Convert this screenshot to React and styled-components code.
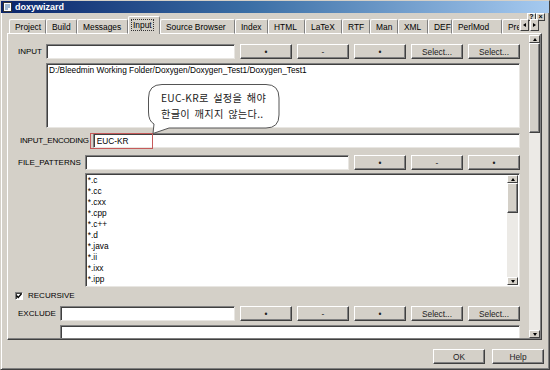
import React from 'react'
import styled, { createGlobalStyle } from 'styled-components'

const GlobalStyle = createGlobalStyle`
  html, body {
    margin: 0;
    padding: 0;
    background: #d4d0c8;
  }
  body {
    font-family: "Liberation Sans", Arial, sans-serif;
  }
`

const tabs = [
  { name: 'Project', w: 37 },
  { name: 'Build', w: 31 },
  { name: 'Messages', w: 51 },
  { name: 'Input', w: 32, active: true },
  { name: 'Source Browser', w: 75 },
  { name: 'Index', w: 33 },
  { name: 'HTML', w: 37 },
  { name: 'LaTeX', w: 37 },
  { name: 'RTF', w: 28 },
  { name: 'Man', w: 28 },
  { name: 'XML', w: 30 },
  { name: 'DEF', w: 24 },
  { name: 'PerlMod', w: 50 },
  { name: 'Preprocessor', w: 70 },
]

const patterns = ['*.c', '*.cc', '*.cxx', '*.cpp', '*.c++', '*.d', '*.java', '*.ii', '*.ixx', '*.ipp']

function App() {
  return (
    <>
      <GlobalStyle />
      <Window>
        <TitleBar>
          <AppIcon viewBox="0 0 9 10">
            <rect x="0.5" y="0.5" width="8" height="9" fill="#fff" stroke="#333" />
            <path d="M2 3h5M2 5h5M2 7h3" stroke="#3a6ea5" strokeWidth="1" />
          </AppIcon>
          doxywizard
        </TitleBar>
        <CaptionButtons>
          <CaptionBtn>?</CaptionBtn>
          <CaptionBtn>×</CaptionBtn>
        </CaptionButtons>

        <TabBar>
          <TabList>
            {tabs.map(t => (
              <Tab key={t.name} $w={t.w} $active={t.active}>
                {t.active ? <Focus>{t.name}</Focus> : t.name}
              </Tab>
            ))}
          </TabList>
          <TabArrow><Tri $dir="left" /></TabArrow>
          <TabArrow><Tri $dir="right" /></TabArrow>
        </TabBar>

        <Pane>
          <Content>
            <Group>
              <Label>INPUT</Label>
              <Row>
                <Field />
                <Btn>•</Btn>
                <Btn>-</Btn>
                <Btn>•</Btn>
                <Btn>Select...</Btn>
                <Btn>Select...</Btn>
              </Row>
              <span />
              <ListBox $h={65}>
                <PathText>D:/Bleedmin Working Folder/Doxygen/Doxygen_Test1/Doxygen_Test1</PathText>
              </ListBox>
            </Group>

            <Group $mt={5}>
              <Label $pl={2} $tight>INPUT_ENCODING</Label>
              <Row>
                <Field>EUC-KR</Field>
              </Row>
            </Group>

            <Group $mt={7} $rowGap={3}>
              <Label>FILE_PATTERNS</Label>
              <Row>
                <Field />
                <Btn>•</Btn>
                <Btn>-</Btn>
                <Btn>•</Btn>
              </Row>
              <span />
              <ListBox $h={114}>
                <Items>
                  {patterns.map(p => <Item key={p}>{p}</Item>)}
                </Items>
                <VScroll>
                  <Arrow><Tri $dir="up" /></Arrow>
                  <Thumb $h={30} />
                  <Track />
                  <Arrow><Tri $dir="down" /></Arrow>
                </VScroll>
              </ListBox>
            </Group>

            <CheckRow>
              <CheckBox>
                <svg width="6" height="6" viewBox="0 0 6 6">
                  <path d="M0.5 2.5 L2.2 4.5 L5.5 0.8" stroke="#000" strokeWidth="1.3" fill="none" />
                </svg>
              </CheckBox>
              RECURSIVE
            </CheckRow>

            <Group $mt={6}>
              <Label>EXCLUDE</Label>
              <Row>
                <Field />
                <Btn>•</Btn>
                <Btn>-</Btn>
                <Btn>•</Btn>
                <Btn>Select...</Btn>
                <Btn>Select...</Btn>
              </Row>
              <span />
              <ListBox $h={40} />
            </Group>
          </Content>
          <VScroll>
            <Arrow><Tri $dir="up" /></Arrow>
            <Thumb $h={90} />
            <Track />
            <Arrow><Tri $dir="down" /></Arrow>
          </VScroll>
        </Pane>

        <Footer>
          <Btn>OK</Btn>
          <Btn>Help</Btn>
        </Footer>

        <Highlight />
        <Bubble>
          <BubbleShape viewBox="0 0 132 50">
            <path
              d="M14 0.5 H118 Q131 0.5 131 14 V31 Q131 44 118 44 H21 L5 49.5 L6 40 Q0.5 37 0.5 28 V14 Q0.5 0.5 14 0.5 Z"
              fill="#fff"
              stroke="#555"
              strokeWidth="1"
            />
          </BubbleShape>
          <BubbleText>
            <div>EUC-KR로 설정을 해야</div>
            <div>한글이 깨지지 않는다..</div>
          </BubbleText>
        </Bubble>
      </Window>
    </>
  )
}

const Window = styled.div`
  position: relative;
  box-sizing: border-box;
  width: 550px;
  height: 370px;
  background: #d4d0c8;
  border: 1px solid;
  border-color: #d4d0c8 #404040 #404040 #d4d0c8;
  box-shadow: inset 1px 1px 0 #fff, inset -1px -1px 0 #808080;
  display: flex;
  flex-direction: column;
  overflow: hidden;
`

const TitleBar = styled.div`
  height: 12px;
  display: flex;
  align-items: center;
  gap: 3px;
  padding-left: 2px;
  background: linear-gradient(to right, #0a246a, #3a6ea5 45%, #a6caf0);
  color: #fff;
  font-size: 9px;
  font-weight: bold;
  flex-shrink: 0;
`

const AppIcon = styled.svg`
  width: 9px;
  height: 10px;
`

const CaptionButtons = styled.div`
  position: absolute;
  top: 12px;
  right: 4px;
  display: flex;
`

const CaptionBtn = styled.div`
  box-sizing: border-box;
  width: 9px;
  height: 8px;
  background: #d4d0c8;
  border: 1px solid;
  border-color: #fff #404040 #404040 #fff;
  font-size: 7px;
  font-weight: bold;
  line-height: 6px;
  text-align: center;
  color: #000;
`

const TabBar = styled.div`
  display: flex;
  align-items: flex-end;
  height: 17px;
  margin-top: 3px;
  padding-left: 8px;
  padding-right: 10px;
  flex-shrink: 0;
  position: relative;
  z-index: 1;
`

const TabList = styled.div`
  flex: 1;
  display: flex;
  align-items: flex-end;
  overflow: hidden;
  height: 18px;
  margin-bottom: -1px;
`

const Tab = styled.div`
  box-sizing: border-box;
  flex-shrink: 0;
  width: ${p => p.$w}px;
  height: ${p => (p.$active ? 18 : 15)}px;
  padding-left: ${p => (p.$active ? 3 : 5)}px;
  padding-bottom: ${p => (p.$active ? 1 : 0)}px;
  display: flex;
  align-items: center;
  background: #d4d0c8;
  border-top: 1px solid #fff;
  border-left: 1px solid #fff;
  border-right: 1px solid #808080;
  border-bottom: ${p => (p.$active ? 'none' : '1px solid #fff')};
  border-radius: 2px 2px 0 0;
  font-size: 8.4px;
  color: #000;
  white-space: nowrap;
  overflow: hidden;
`

const Focus = styled.span`
  outline: 1px dotted #333;
  padding: 0 1px;
`

const TabArrow = styled.div`
  box-sizing: border-box;
  width: 9px;
  height: 12px;
  margin-left: 1px;
  margin-bottom: 2px;
  background: #d4d0c8;
  border: 1px solid;
  border-color: #fff #404040 #404040 #fff;
  display: flex;
  align-items: center;
  justify-content: center;
`

const Tri = styled.span`
  width: 0;
  height: 0;
  border-style: solid;
  ${p => p.$dir === 'up' && 'border-width: 0 2.5px 3px 2.5px; border-color: transparent transparent #000 transparent;'}
  ${p => p.$dir === 'down' && 'border-width: 3px 2.5px 0 2.5px; border-color: #000 transparent transparent transparent;'}
  ${p => p.$dir === 'left' && 'border-width: 2.5px 3px 2.5px 0; border-color: transparent #000 transparent transparent;'}
  ${p => p.$dir === 'right' && 'border-width: 2.5px 0 2.5px 3px; border-color: transparent transparent transparent #000;'}
`

const Pane = styled.div`
  box-sizing: border-box;
  height: 307px;
  margin: 0 7px 0 6px;
  border: 1px solid;
  border-color: #fff #404040 #404040 #fff;
  box-shadow: inset -1px -1px 0 #808080, inset 1px 1px 0 #d4d0c8;
  padding: 1px;
  display: flex;
  flex-shrink: 0;
`

const Content = styled.div`
  flex: 1;
  overflow: hidden;
  padding: 9px 9px 0 9px;
  display: flex;
  flex-direction: column;
`

const Group = styled.div`
  display: grid;
  grid-template-columns: auto 1fr;
  column-gap: 4px;
  row-gap: ${p => p.$rowGap ?? 4}px;
  margin-top: ${p => p.$mt ?? 0}px;
  flex-shrink: 0;
`

const Label = styled.div`
  font-size: 8px;
  letter-spacing: ${p => (p.$tight ? '-0.2px' : '0')};
  color: #000;
  display: flex;
  align-items: center;
  padding-left: ${p => p.$pl ?? 0}px;
  white-space: nowrap;
`

const Row = styled.div`
  display: flex;
  gap: 5px;
  height: 15px;
`

const Field = styled.div`
  box-sizing: border-box;
  flex: 1;
  height: 15px;
  background: #fff;
  border: 1px solid;
  border-color: #808080 #e8e6e2 #e8e6e2 #808080;
  box-shadow: inset 1px 1px 0 #404040;
  padding-left: 3px;
  font-size: 8.3px;
  display: flex;
  align-items: center;
  color: #000;
`

const Btn = styled.div`
  box-sizing: border-box;
  width: 52px;
  height: 15px;
  flex-shrink: 0;
  background: #d4d0c8;
  border: 1px solid;
  border-color: #fff #404040 #404040 #fff;
  box-shadow: inset -1px -1px 0 #808080;
  display: flex;
  align-items: center;
  justify-content: center;
  font-size: 8.3px;
  color: #222;
`

const ListBox = styled.div`
  box-sizing: border-box;
  height: ${p => p.$h}px;
  background: #fff;
  border: 1px solid;
  border-color: #808080 #e8e6e2 #e8e6e2 #808080;
  box-shadow: inset 1px 1px 0 #404040;
  padding: 1px;
  display: flex;
  font-size: 8.3px;
  color: #000;
`

const PathText = styled.div`
  padding: 1px 0 0 1px;
  line-height: 9px;
  white-space: nowrap;
`

const Items = styled.div`
  flex: 1;
  padding-left: 1px;
`

const Item = styled.div`
  line-height: 11px;
  font-size: 8.3px;
`

const VScroll = styled.div`
  width: 11px;
  display: flex;
  flex-direction: column;
  flex-shrink: 0;
`

const Arrow = styled.div`
  box-sizing: border-box;
  height: 8px;
  background: #d4d0c8;
  border: 1px solid;
  border-color: #fff #404040 #404040 #fff;
  display: flex;
  align-items: center;
  justify-content: center;
  flex-shrink: 0;
`

const Thumb = styled.div`
  box-sizing: border-box;
  height: ${p => p.$h}px;
  background: #d4d0c8;
  border: 1px solid;
  border-color: #fff #404040 #404040 #fff;
  box-shadow: inset -1px -1px 0 #808080;
  flex-shrink: 0;
`

const Track = styled.div`
  flex: 1;
  background: #eceae6;
`

const CheckRow = styled.div`
  display: flex;
  align-items: center;
  gap: 5px;
  height: 9px;
  margin-top: 4px;
  margin-left: -3px;
  font-size: 8px;
  color: #000;
  flex-shrink: 0;
`

const CheckBox = styled.div`
  box-sizing: border-box;
  width: 8px;
  height: 8px;
  background: #fff;
  border: 1px solid;
  border-color: #808080 #fff #fff #808080;
  box-shadow: inset 1px 1px 0 #404040;
  display: flex;
  align-items: center;
  justify-content: center;
`

const Footer = styled.div`
  display: flex;
  justify-content: flex-end;
  gap: 7px;
  padding: 9px 5px 0 0;
`

const Highlight = styled.div`
  position: absolute;
  left: 89px;
  top: 132px;
  width: 63px;
  height: 16px;
  box-sizing: border-box;
  border: 1px solid #c65a5a;
`

const Bubble = styled.div`
  position: absolute;
  left: 147px;
  top: 83px;
  width: 132px;
  height: 50px;
`

const BubbleShape = styled.svg`
  position: absolute;
  inset: 0;
  width: 132px;
  height: 50px;
`

const BubbleText = styled.div`
  position: relative;
  padding: 6px 0 0 13px;
  font-family: "Noto Sans CJK KR", "Liberation Sans", sans-serif;
  font-size: 10.2px;
  line-height: 16px;
  letter-spacing: 0.3px;
  word-spacing: 2px;
  color: #222;
  white-space: nowrap;
`

export default App
